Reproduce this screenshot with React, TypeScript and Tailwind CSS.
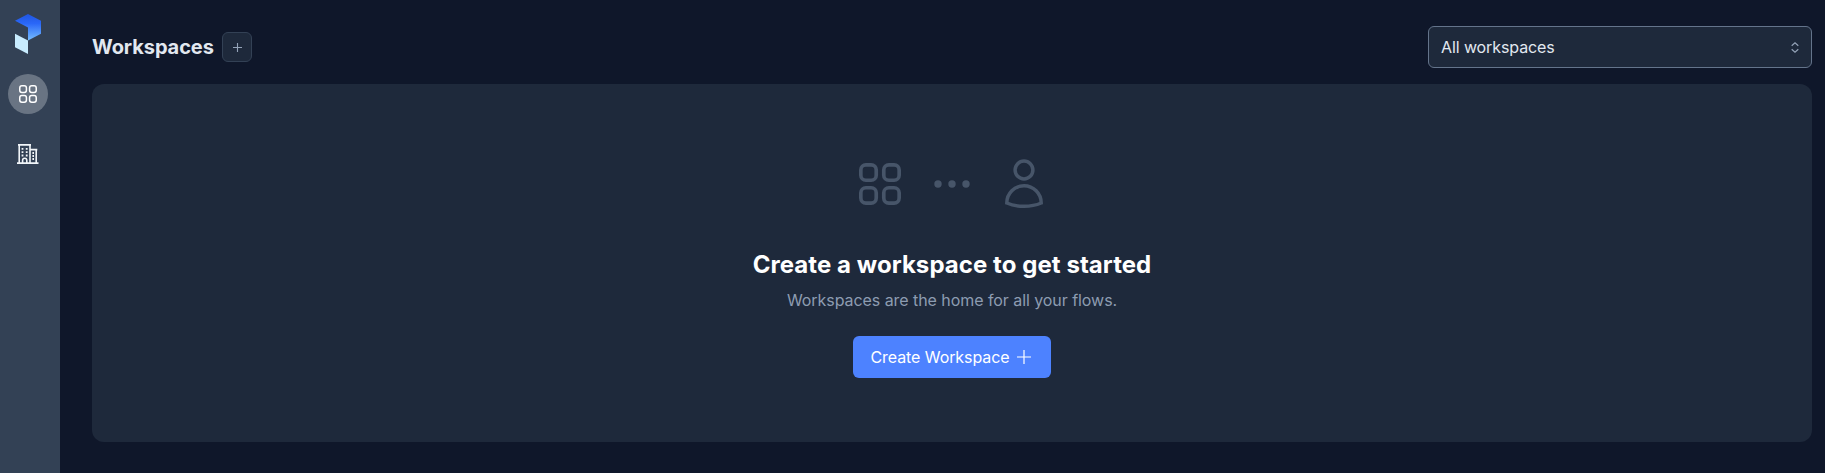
import React from "react";

function Logo() {
  return (
    <svg width="26" height="40" viewBox="0 0 26 40" fill="none">
      <defs>
        <linearGradient id="logo-fold" x1="13" y1="0" x2="13" y2="27" gradientUnits="userSpaceOnUse">
          <stop stopColor="#2055e0" />
          <stop offset="0.35" stopColor="#2a67f8" />
          <stop offset="1" stopColor="#79c0ff" />
        </linearGradient>
      </defs>
      <path d="M13 0L26 6.7V19.8L13 26.6V13.5L0 6.7Z" fill="url(#logo-fold)" />
      <path d="M0 19.8L13 26.6V40L0 33.2Z" fill="#c8ecff" />
    </svg>
  );
}

function GridIcon({ size, stroke }: { size: number; stroke: number }) {
  const side = 10.9 - stroke;
  const near = stroke / 2;
  const far = 24 - near - side;
  return (
    <svg width={size} height={size} viewBox="0 0 24 24" fill="none" stroke="currentColor" strokeWidth={stroke}>
      <rect x={near} y={near} width={side} height={side} rx="2.9" />
      <rect x={far} y={near} width={side} height={side} rx="2.9" />
      <rect x={near} y={far} width={side} height={side} rx="2.9" />
      <rect x={far} y={far} width={side} height={side} rx="2.9" />
    </svg>
  );
}

function BuildingIcon() {
  return (
    <svg width="22" height="20" viewBox="0 0 22 20" fill="none" stroke="#f1f5f9" strokeWidth="1.6">
      <path d="M1 .9H14M0 19.1H21.5M2.2 1V19M13 1V19M13 5.6H20.3M19.2 6V19" />
      <path d="M5.6 19V16.4A2.1 2.1 0 0 1 9.8 16.4V19" />
      <path d="M4.6 4.8H6.4M8.8 4.8H10.6M4.6 8.2H6.4M8.8 8.2H10.6M4.6 11.5H6.4M8.8 11.5H10.6M15.4 9H17M15.4 12H17M15.4 15H17" strokeWidth="1.8" />
    </svg>
  );
}

export default function App() {
  return (
    <div className="flex h-[473px] w-full overflow-hidden bg-[#0f172a] font-['Inter',sans-serif] text-base text-[#e2e8f0]">
      <nav className="flex w-[60px] shrink-0 flex-col items-center bg-[#334155] pt-3.5 pr-1">
        <Logo />
        <a className="mt-5 flex size-10 items-center justify-center rounded-full bg-[#697483] text-white">
          <GridIcon size={18} stroke={2} />
        </a>
        <a className="mt-5 flex size-10 items-center justify-center">
          <BuildingIcon />
        </a>
      </nav>
      <main className="flex-1 pt-[26px] pr-[13px] pl-8">
        <header className="flex h-[42px] items-center justify-between">
          <div className="flex items-center gap-2">
            <h1 className="w-[122px] text-xl font-bold tracking-[-0.08px] whitespace-nowrap">Workspaces</h1>
            <button className="flex size-[30px] items-center justify-center rounded-md border border-[#334155] bg-[#1e293b]">
              <svg width="9" height="9" viewBox="0 0 9 9" stroke="#94a3b8" strokeWidth="1.1">
                <path d="M4.5 0V9M0 4.5H9" />
              </svg>
            </button>
          </div>
          <button className="flex h-[42px] w-96 items-center justify-between rounded-md border border-[#64748b] bg-[#1e293b] px-3">
            <span className="tracking-[-0.1px]">All workspaces</span>
            <svg width="8" height="11" viewBox="0 0 8 11" fill="none" stroke="#94a3b8" strokeWidth="1.2">
              <path d="M.7 3.7L4 .8L7.3 3.7M.7 7.3L4 10.2L7.3 7.3" />
            </svg>
          </button>
        </header>
        <section className="mt-4 flex h-[358px] flex-col items-center rounded-xl bg-[#1e293b] pt-[75px]">
          <div className="flex h-[50px] items-center pr-0.5 text-[#475569]">
            <GridIcon size={42} stroke={2.1} />
            <svg className="ml-[33px]" width="36" height="8" viewBox="0 0 36 8" fill="currentColor">
              <circle cx="4" cy="4" r="3.7" />
              <circle cx="18" cy="4" r="3.7" />
              <circle cx="32" cy="4" r="3.7" />
            </svg>
            <svg className="ml-[35px]" width="38" height="50" viewBox="0 0 38 50" fill="none" stroke="currentColor" strokeWidth="3.5">
              <circle cx="19" cy="11" r="8.9" />
              <path d="M1.8 44C1.8 34.5 9.5 26.7 19 26.7S36.2 34.5 36.2 44C31 46.3 25 47.3 19 47.3S7 46.3 1.8 44Z" />
            </svg>
          </div>
          <h2 className="mt-10 text-2xl font-bold tracking-[0.06px] text-white">Create a workspace to get started</h2>
          <p className="mt-[7px] tracking-[-0.06px] text-[#8d9cb1]">Workspaces are the home for all your flows.</p>
          <button className="mt-6 flex h-[42px] w-[198px] items-center gap-[7px] rounded-md bg-[#4d82ff] pl-[17.5px] text-white">
            <span className="tracking-[-0.08px]">Create Workspace</span>
            <svg width="14" height="14" viewBox="0 0 14 14" stroke="currentColor" strokeWidth="1.2">
              <path d="M7 0V14M0 7H14" />
            </svg>
          </button>
        </section>
      </main>
    </div>
  );
}
